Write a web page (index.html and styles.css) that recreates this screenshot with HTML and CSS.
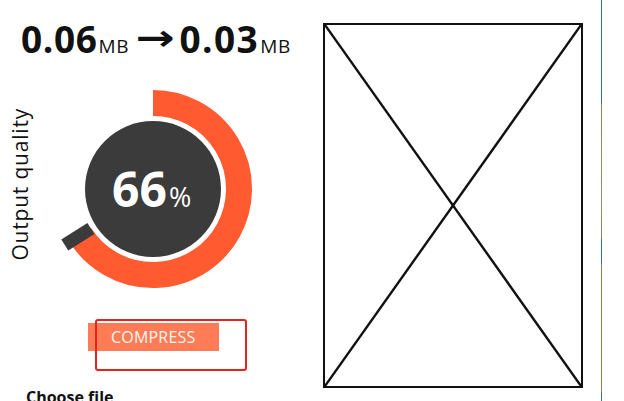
FILE: index.html
```html
<!DOCTYPE html>
<html lang="en">
<head>
<meta charset="utf-8">
<title>Compress</title>
<link rel="stylesheet" href="styles.css">
</head>
<body>
<div class="page">
  <div class="left">
    <div class="sizes">
      <span class="num">0.06</span><span class="unit">MB</span><span class="arrow">→</span><span class="num num-wide">0.03</span><span class="unit">MB</span>
    </div>
    <div class="gauge-row">
      <div class="label">Output quality</div>
      <svg class="gauge" width="220" height="220" viewBox="0 0 220 220">
        <path class="arc" d="M110 24 A86 86 0 1 1 37.4 156.1"/>
        <line class="knob" x1="47.9" y1="149.4" x2="21.8" y2="166"/>
        <circle class="core" cx="110" cy="110" r="68"/>
        <text class="pct" x="69" y="128"><tspan class="pct-num">66</tspan><tspan class="pct-sign" dx="2">%</tspan></text>
      </svg>
    </div>
    <div class="btn-row">
      <button class="compress">COMPRESS</button>
      <div class="highlight"></div>
    </div>
    <div class="choose">Choose file</div>
  </div>
  <div class="preview">
    <svg class="cross" viewBox="0 0 256 361" preserveAspectRatio="none">
      <line x1="0" y1="0" x2="256" y2="361"/>
      <line x1="256" y1="0" x2="0" y2="361"/>
    </svg>
  </div>
  <div class="edge"></div>
</div>
</body>
</html>
```
FILE: styles.css
```css
html, body {
  margin: 0;
  padding: 0;
  background: #ffffff;
  overflow: hidden;
}
body {
  width: 624px;
  height: 401px;
  font-family: "Open Sans", "Noto Sans", sans-serif;
  color: #111111;
}
.page {
  display: flex;
  height: 401px;
}
.left {
  width: 323px;
  flex: none;
}
.sizes {
  padding: 20px 0 0 21px;
  line-height: 37px;
  height: 37px;
  white-space: nowrap;
}
.num {
  font-size: 37px;
  font-weight: 700;
  letter-spacing: 0.6px;
}
.num-wide {
  letter-spacing: 1.4px;
}
.unit {
  font-size: 19px;
  font-weight: 400;
  margin-left: 1px;
  letter-spacing: 0.8px;
}
.arrow {
  display: inline-block;
  font-family: "DejaVu Sans", sans-serif;
  font-size: 36px;
  font-weight: 700;
  margin: 0 9px 0 11px;
  transform: scaleX(1.3);
  position: relative;
  top: -3px;
}
.gauge-row {
  display: flex;
  align-items: center;
  margin-top: 22px;
  height: 220px;
}
.label {
  writing-mode: vertical-rl;
  transform: rotate(180deg);
  font-size: 21px;
  letter-spacing: 0.8px;
  line-height: 24px;
  width: 24px;
  margin-left: 8px;
  margin-right: 11px;
  margin-bottom: 10px;
  color: #111111;
}
.gauge {
  display: block;
  flex: none;
}
.arc {
  fill: none;
  stroke: #ff5a30;
  stroke-width: 26;
}
.knob {
  stroke: #3b3b3b;
  stroke-width: 13;
}
.core {
  fill: #3b3b3b;
}
.pct {
  fill: #ffffff;
  font-family: "Open Sans", "Noto Sans", sans-serif;
}
.pct-num {
  font-size: 48px;
  font-weight: 700;
}
.pct-sign {
  font-size: 27px;
  font-weight: 400;
}
.btn-row {
  position: relative;
  margin-top: 24px;
  height: 28px;
}
.compress {
  display: block;
  margin-left: 88px;
  width: 131px;
  height: 28px;
  padding: 0 0 0 23px;
  border: none;
  background: #ff7c56;
  color: #fff5f0;
  font-family: "Open Sans", "Noto Sans", sans-serif;
  font-size: 16px;
  letter-spacing: 0.2px;
  text-align: left;
  line-height: 28px;
}
.highlight {
  position: absolute;
  left: 95px;
  top: -4px;
  width: 148px;
  height: 48px;
  border: 2px solid #e8231b;
  border-radius: 3px;
}
.choose {
  margin: 36px 0 0 26px;
  font-size: 16px;
  font-weight: 700;
  line-height: 20px;
}
.preview {
  margin-top: 23px;
  width: 256px;
  height: 361px;
  border: 2px solid #111111;
  flex: none;
}
.cross {
  display: block;
  width: 256px;
  height: 361px;
}
.cross line {
  stroke: #111111;
  stroke-width: 2.4;
}
.edge {
  margin-left: 18px;
  width: 1px;
  height: 401px;
  flex: none;
  background: linear-gradient(to bottom,
    #2f6f98 0px, #2f6f98 103px,
    #7d8a55 104px, #8f9070 200px, #7d8a55 238px,
    #2f6f98 240px, #2f6f98 263px,
    #858a45 265px, #858a45 392px,
    #2f6f98 394px);
}
```
